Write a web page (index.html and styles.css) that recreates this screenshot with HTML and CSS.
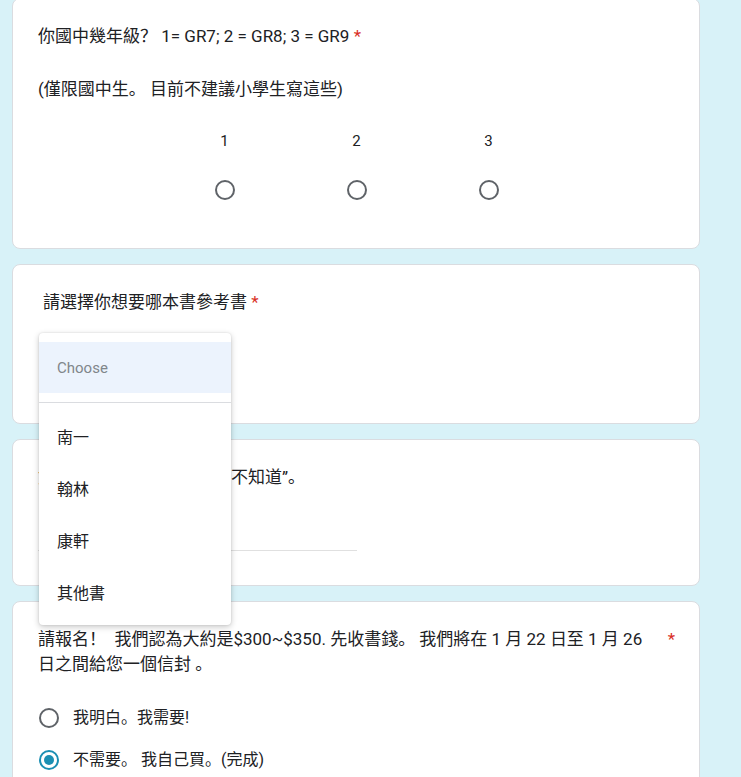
FILE: index.html
```html
<!DOCTYPE html>
<html lang="zh-Hant">
<head>
<meta charset="utf-8">
<title>表單</title>
<link rel="stylesheet" href="styles.css">
</head>
<body>
<main class="form">
  <section class="card card-first">
    <div class="q-title">你國中幾年級？ 1= GR7; 2 = GR8; 3 = GR9 <span class="req">*</span></div>
    <div class="q-desc">(僅限國中生。 目前不建議小學生寫這些)</div>
    <div class="scale">
      <div class="scale-col"><span class="scale-label">1</span><span class="radio"></span></div>
      <div class="scale-col"><span class="scale-label">2</span><span class="radio"></span></div>
      <div class="scale-col"><span class="scale-label">3</span><span class="radio"></span></div>
    </div>
  </section>

  <section class="card card-select">
    <div class="q-title q-title-indent">請選擇你想要哪本書參考書 <span class="req">*</span></div>
    <div class="select-field"></div>
    <div class="menu">
      <div class="menu-choose">Choose</div>
      <div class="menu-divider"></div>
      <div class="menu-item">南一</div>
      <div class="menu-item">翰林</div>
      <div class="menu-item">康軒</div>
      <div class="menu-item">其他書</div>
    </div>
  </section>

  <section class="card card-text">
    <div class="q-title">如果你還沒決定，請填寫“不知道”。</div>
    <div class="text-input"></div>
  </section>

  <section class="card card-choice">
    <div class="q-title-row">
      <div class="q-title q-title-grow">請報名！&nbsp; 我們認為大約是$300~$350. 先收書錢。 我們將在 1 月 22 日至 1 月 26 日之間給您一個信封 。</div>
      <span class="req req-side">*</span>
    </div>
    <div class="options">
      <div class="option"><span class="radio"></span><span class="option-text">我明白。我需要!</span></div>
      <div class="option"><span class="radio radio-checked"></span><span class="option-text">不需要。 我自己買。(完成)</span></div>
    </div>
  </section>
</main>
</body>
</html>
```

FILE: styles.css
```css
* { box-sizing: border-box; }
html, body { margin: 0; padding: 0; }
body {
  background: #d8f2f8;
  font-family: Roboto, "Noto Sans CJK SC", sans-serif;
  font-feature-settings: "locl" 0;
  color: #202124;
  overflow: hidden;
}
.form {
  width: 688px;
  margin: -2px 0 0 12px;
  display: flex;
  flex-direction: column;
  gap: 15px;
}
.card {
  position: relative;
  background: #fff;
  border: 1px solid #dadce0;
  border-radius: 8px;
  padding: 25px 24px 24px 25px;
}
.q-title {
  font-size: 17px;
  line-height: 25px;
}
.q-title-indent { padding-left: 5px; }
.req { color: #d93025; }
.q-desc {
  font-size: 17px;
  line-height: 25px;
  margin-top: 28px;
}
.scale {
  display: flex;
  justify-content: center;
  margin-top: 29px;
  padding-bottom: 24px;
}
.scale-col {
  width: 132px;
  display: flex;
  flex-direction: column;
  align-items: center;
  gap: 29px;
}
.scale-label {
  font-size: 15px;
  line-height: 20px;
}
.radio {
  width: 20px;
  height: 20px;
  border: 2px solid #5f6368;
  border-radius: 50%;
  display: flex;
  align-items: center;
  justify-content: center;
  flex: none;
}
.radio-checked { border-color: #1b8fb3; }
.radio-checked::after {
  content: "";
  width: 10px;
  height: 10px;
  border-radius: 50%;
  background: #1b8fb3;
}
.select-field {
  margin-top: 24px;
  height: 60px;
}
.menu {
  position: absolute;
  left: 26px;
  top: 68px;
  width: 192px;
  padding: 9px 0 7px;
  background: #fff;
  border-radius: 4px;
  box-shadow: 0 2px 6px rgba(0, 0, 0, 0.22), 0 0 2px rgba(0, 0, 0, 0.12);
  z-index: 10;
}
.menu-choose {
  height: 51px;
  display: flex;
  align-items: center;
  padding-left: 18px;
  background: #ecf3fd;
  color: #80868b;
  font-size: 15px;
}
.menu-divider {
  height: 1px;
  background: #dadce0;
  margin: 9px 0 7px;
}
.menu-item {
  height: 52px;
  display: flex;
  align-items: center;
  padding-left: 18px;
  font-size: 16px;
  color: #202124;
}
.text-input {
  width: 50%;
  height: 37px;
  margin-top: 24px;
  margin-bottom: 10px;
  border-bottom: 1px solid #e0e0e0;
}
.q-title-row {
  display: flex;
  align-items: flex-start;
}
.q-title-grow { flex: 1; }
.req-side {
  font-size: 17px;
  line-height: 25px;
  margin-left: 12px;
}
.options {
  margin-top: 20px;
  display: flex;
  flex-direction: column;
}
.option {
  height: 42px;
  display: flex;
  align-items: center;
}
.option .radio { margin-left: 1px; }
.option-text {
  margin-left: 14px;
  font-size: 16px;
  line-height: 22px;
}
```
